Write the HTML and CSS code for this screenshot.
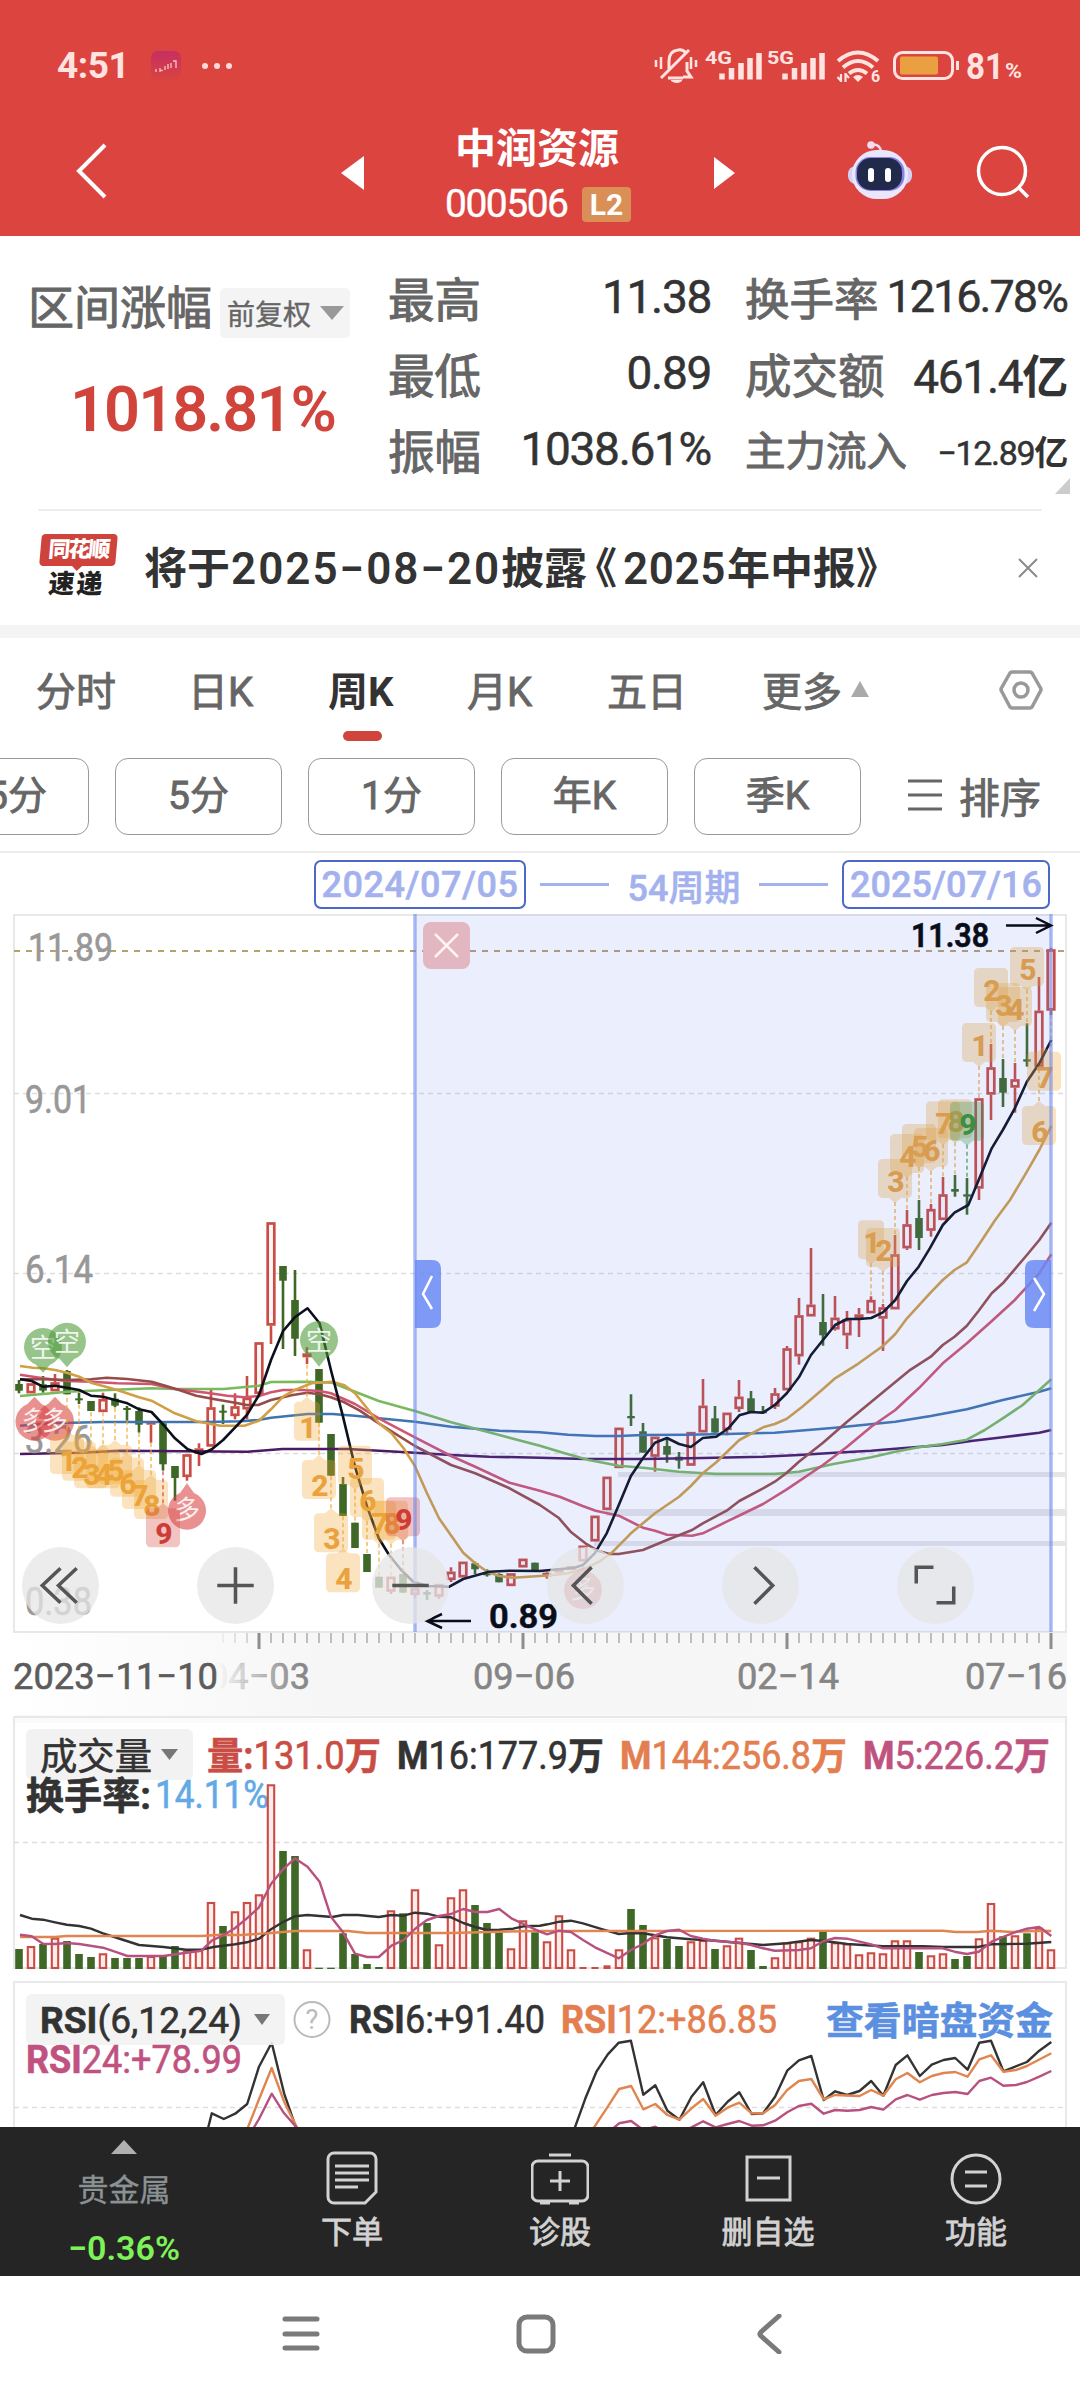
FILE: index.html
```html
<!DOCTYPE html>
<html lang="zh-CN">
<head>
<meta charset="utf-8">
<title>中润资源 000506</title>
<link rel="stylesheet" href="styles.css">
</head>
<body>
<header class="top">
  <div class="status">
    <span class="clock">4:51</span>
    <svg class="app" width="30" height="30" viewBox="0 0 30 30"><defs><linearGradient id="ag" x1="0" y1="0" x2="0" y2="1"><stop offset="0" stop-color="#c72e62"/><stop offset="1" stop-color="#d8453f"/></linearGradient></defs><rect width="30" height="30" rx="7" fill="url(#ag)"/><path d="M5 18v3M9 17v3l3-1M14 15v4M17 13v5M20 12v5M22 10h3v7" fill="none" stroke="#ffc4c4" stroke-width="1.3"/></svg>
    <svg class="dots" width="32" height="8" viewBox="0 0 32 8" fill="#ffdcd9"><circle cx="4" cy="4" r="3"/><circle cx="16" cy="4" r="3"/><circle cx="28" cy="4" r="3"/></svg>
    <svg class="signals" width="375" height="36" viewBox="653 48 375 36" fill="none" stroke="#ffe3e0" stroke-width="3">
      <path d="M669 69V61q0-10 9-11q5-1 8 3M683 77h8l-4-6v-9M668 78h15M689 50L661 78" /><path d="M656 60v7M661 57v12M696 60v7M691 57v12" stroke-width="2.500"/><path d="M671 80.500h11q-5 4-11 0z" fill="#ffe3e0" stroke-width="1"/>
      <g stroke-width="5.500"><path d="M722 79.500v-6M731.500 79.500V68M741 79.500V63M750 79.500V58M759 79.500V53"/><path d="M785 79.500v-6M794.500 79.500V68M804 79.500V63M813 79.500V58M822 79.500V53"/></g>
      <path d="M838 61q20-17 40 0M843 67.500q15-13 30 0M849 73.500q9-7 18 0" stroke-width="4"/><path d="M853 77q5-4 10 0l-5 5z" fill="#ffe3e0" stroke="none"/><path d="M841 82v-8M837.500 77l3.500 4M845.500 73v9M849 78l-3.500-4" stroke-width="2.200"/>
      <rect x="894.500" y="52.500" width="58" height="26" rx="8"/><rect x="900" y="56.500" width="38" height="18" rx="2" fill="#eaa040" stroke="none"/><path d="M957.500 61v9"/>
      <g class="sig-txt" fill="#ffe3e0" stroke="none"><text x="705" y="64" font-size="19" textLength="27" lengthAdjust="spacingAndGlyphs">4G</text><text x="767" y="64" font-size="19" textLength="27" lengthAdjust="spacingAndGlyphs">5G</text><text x="871" y="82" font-size="16">6</text><text x="966" y="79" font-size="37" textLength="38" lengthAdjust="spacingAndGlyphs">81</text><text x="1005" y="78" font-size="21" textLength="17" lengthAdjust="spacingAndGlyphs">%</text></g>
    </svg>
  </div>
  <div class="titlebar">
    <svg class="back" width="34" height="56" viewBox="0 0 34 56" fill="none" stroke="#fff" stroke-width="4"><path d="M31 2L5 28l26 26"/></svg>
    <svg class="prev" width="24" height="34" viewBox="0 0 24 34"><path d="M23 0v34L0 17z" fill="#fff"/></svg>
    <div class="title">
      <h1>中润资源</h1>
      <div class="code"><span>000506</span><b>L2</b></div>
    </div>
    <svg class="next" width="22" height="32" viewBox="0 0 22 32"><path d="M0 0v32l21-16z" fill="#fff"/></svg>
    <svg class="robot" width="64" height="60" viewBox="0 0 64 60"><circle cx="23" cy="5" r="3.800" fill="#f3dcf0"/><path d="M25 4.500q7 0 8 7" fill="none" stroke="#f3dcf0" stroke-width="2.500"/><rect x="0" y="26" width="64" height="18" rx="8" fill="#d3d1f4"/><rect x="4" y="10" width="56" height="49" rx="25" fill="#eae6fc"/><rect x="7.500" y="17" width="49" height="34" rx="15" fill="#8a80e6"/><rect x="9" y="18" width="45" height="32" rx="14" fill="#222a4c"/><rect x="20" y="28" width="6" height="14" rx="3" fill="#fff"/><rect x="37" y="28" width="6" height="14" rx="3" fill="#fff"/></svg>
    <svg class="search" width="54" height="54" viewBox="0 0 54 54" fill="none" stroke="#fff" stroke-width="3.500"><circle cx="26" cy="26" r="23.500"/><path d="M42 42l10 10"/></svg>
  </div>
</header>

<section class="stats">
  <div class="range">
    <div class="range-head"><span class="lbl">区间涨幅</span><span class="adjust">前复权<i class="tri-down"></i></span></div>
    <div class="gain">1018.81%</div>
  </div>
  <dl class="col mid">
    <div><dt>最高</dt><dd>11.38</dd></div>
    <div><dt>最低</dt><dd>0.89</dd></div>
    <div><dt>振幅</dt><dd>1038.61%</dd></div>
  </dl>
  <dl class="col end">
    <div><dt class="turn">换手率</dt><dd class="tight">1216.78%</dd></div>
    <div><dt>成交额</dt><dd>461.4<b>亿</b></dd></div>
    <div class="small"><dt>主力流入</dt><dd>−12.89<b>亿</b></dd></div>
  </dl>
  <i class="corner"></i>
</section>

<section class="news">
  <div class="logo"><span>同花顺</span><em>速递</em></div>
  <p>将于<u class="dt">2025−08−20</u>披露<u class="open">《</u><u class="yr">2025</u>年中报》</p>
  <svg width="20" height="20" viewBox="0 0 20 20" stroke="#8a8a8a" stroke-width="2"><path d="M1 1l18 18M19 1L1 19"/></svg>
</section>

<nav class="tabs">
  <span>分时</span><span>日K</span><span class="on">周K</span><span>月K</span><span>五日</span><span class="more">更多<i></i></span>
  <svg width="44" height="42" viewBox="0 0 44 42" fill="none" stroke="#999" stroke-width="3.500"><path d="M13 3h18a3 3 0 0 1 2 1l8 14a4 4 0 0 1 0 5l-8 15a3 3 0 0 1-2 1H13a3 3 0 0 1-2-1L3 23a4 4 0 0 1 0-5l8-14a3 3 0 0 1 2-1z"/><circle cx="22" cy="21" r="7"/></svg>
</nav>
<div class="chips">
  <span>15分</span><span>5分</span><span>1分</span><span>年K</span><span>季K</span>
  <div class="sort"><svg width="36" height="34" viewBox="0 0 36 34" stroke="#666" stroke-width="3"><path d="M1 3h34M1 17h34M1 31h34"/></svg>排序</div>
</div>
<div class="span-row">
  <span class="date">2024/07/05</span><i></i><span class="weeks">54周期</span><i></i><span class="date second">2025/07/16</span>
</div>

<section class="price">
  <svg id="price" width="1080" height="803" viewBox="0 912 1080 803"></svg>
  <div class="tools">
    <span><svg viewBox="-38 -38 76 76"><path d="M0-17L-18 0L0 17M16-17L-2 0L16 17"/></svg></span>
    <span><svg viewBox="-38 -38 76 76"><path d="M-18 0H18M0-18V18"/></svg></span>
    <span><svg viewBox="-38 -38 76 76"><path d="M-18 0H18"/></svg></span>
    <span><svg viewBox="-38 -38 76 76"><path d="M6-18L-12 0L6 18"/></svg></span>
    <span><svg viewBox="-38 -38 76 76"><path d="M-6-18L12 0L-6 18"/></svg></span>
    <span><svg viewBox="-38 -38 76 76"><path d="M-19-2V-18H-2M18 1V17H1"/></svg></span>
  </div>
</section>
<svg id="volume" class="panel" width="1080" height="266" viewBox="0 1715 1080 266"></svg>
<svg id="rsi" class="panel" width="1080" height="146" viewBox="0 1981 1080 146"></svg>

<footer class="bar">
  <div class="metal"><i></i><span>贵金属</span><b>−0.36%</b></div>
  <div><svg width="58" height="54" viewBox="0 0 58 54"><path d="M11 2h36a6 6 0 0 1 6 6v33L42 52H11a6 6 0 0 1-6-6V8a6 6 0 0 1 6-6zM12 15h34M12 22h34M12 29h34M12 36h23"/></svg><span>下单</span></div>
  <div><svg width="58" height="54" viewBox="0 0 58 54"><path d="M18 4h22M7 10h44a6 6 0 0 1 6 6v28a6 6 0 0 1-6 6H7a6 6 0 0 1-6-6V16a6 6 0 0 1 6-6zM29 20v20M19 30h20M9 52h10M38 52h10"/></svg><span>诊股</span></div>
  <div><svg width="58" height="54" viewBox="0 0 58 54"><path d="M8 6h43v43H8zM18 27h23"/></svg><span>删自选</span></div>
  <div><svg width="58" height="54" viewBox="0 0 58 54"><circle cx="29" cy="28" r="24"/><path d="M18 21h22M18 35h22"/></svg><span>功能</span></div>
</footer>
<div class="sysnav">
  <svg width="38" height="40" viewBox="0 0 38 40"><path d="M3 5h32M3 20h32M3 34h32"/></svg>
  <svg width="40" height="40" viewBox="0 0 40 40"><rect x="3" y="3" width="34" height="34" rx="8"/></svg>
  <svg width="26" height="40" viewBox="0 0 26 40"><path d="M23 2L5 18q-2 2 0 4L23 38"/></svg>
</div>
<script src="chart.js"></script>
</body>
</html>
```
FILE: styles.css
```css
* { box-sizing: border-box; }
body { margin: 0; width: 1080px; height: 2400px; overflow: hidden; background: #fff; color: #333; font-family: Roboto, "Noto Sans CJK SC", sans-serif; }
h1, p, dl, dd { margin: 0; }
svg { display: block; flex: none; }
i, em { font-style: normal; }

.top { height: 236px; background: #dc4440; color: #fff; padding-top: 48px; }
.status { height: 36px; display: flex; align-items: center; padding-left: 57px; color: #ffe3e0; }
.clock { width: 94px; font-size: 37px; font-weight: 700; line-height: 36px; letter-spacing: -.5px; }
.dots { margin-left: 20px; }
.signals { margin-left: 420px; }
.sig-txt { font-weight: 700; }
.titlebar { display: flex; height: 152px; align-items: center; padding-left: 74px; padding-top: 26px; }
.back { margin-top: -4px; }
.prev { margin-left: 233px; margin-top: -1px; }
.title { width: 206px; margin-left: 73px; margin-top: 4px; }
h1 { font-size: 41px; line-height: 52px; font-weight: 700; text-align: center; width: 198px; }
.code { display: flex; align-items: center; font-size: 39px; line-height: 46px; margin-top: 6px; padding-left: 7px; }
.code span { width: 126px; letter-spacing: -1.5px; -webkit-text-stroke: .4px; }
.code b { width: 49px; height: 35px; margin-left: 11px; border-radius: 4px; background: #d98f55; font-size: 30px; line-height: 36px; text-align: center; }
.next { margin-left: 70px; }
.robot { margin-left: 112px; margin-top: -6px; }
.search { margin-left: 64px; margin-top: -3px; }

.stats { height: 275px; position: relative; display: flex; padding: 22px 13px 0 28px; }
.stats::after { content: ""; position: absolute; left: 38px; right: 38px; bottom: 0; height: 2px; background: #ededed; }
.range { width: 360px; }
.range-head { display: flex; padding-top: 24px; align-items: center; height: 76px; }
.lbl { font-size: 46px; line-height: 50px; color: #666; width: 192px; white-space: nowrap; -webkit-text-stroke: 1px; }
.adjust { display: flex; align-items: center; width: 130px; height: 50px; margin-top: 10px; padding-left: 7px; background: #f4f4f4; border-radius: 5px; font-size: 28px; color: #666; -webkit-text-stroke: .4px; }
.tri-down { margin-left: 9px; border: 12px solid transparent; border-top: 14px solid #999; border-bottom: 0; }
.gain { margin: 41px 0 0 42px; font-size: 63px; line-height: 70px; font-weight: 600; color: #d1443b; letter-spacing: -1.9px; }
.col > div { height: 76px; display: flex; align-items: center; justify-content: space-between; white-space: nowrap; }
.mid { width: 323px; }
.end { width: 322px; margin-left: 34px; }
dt { font-size: 46.500px; color: #666; -webkit-text-stroke: 1px; }
dt.turn { font-size: 44.500px; }
dd { font-size: 46px; color: #333; letter-spacing: -1.3px; -webkit-text-stroke: .5px; padding-top: 1px; }
dd.tight { letter-spacing: -2px; font-size: 45px; }
dd b { font-weight: 700; -webkit-text-stroke: 0; }
.small dt { font-size: 40.500px; }
.small dd { font-size: 34px; letter-spacing: -1.300px; padding-top: 4px; }
.corner { position: absolute; right: 10px; bottom: 17px; border-left: 15px solid transparent; border-bottom: 16px solid #ccc; }

.news { height: 127px; display: flex; align-items: center; padding: 0 41px 0 39px; border-bottom: 13px solid #f4f4f4; position: relative; }
.logo { width: 78px; height: 66px; margin-top: -2px; transform: skewX(-5deg); }
.logo span { position: relative; display: block; width: 76px; height: 32px; border-radius: 4px; background: #cf433d; color: #fff; font-size: 22px; line-height: 31px; font-weight: 900; text-align: center; letter-spacing: -2px; }
.logo span::after { content: ""; position: absolute; left: 33px; top: 32px; border: 5px solid transparent; border-top-color: #cf433d; border-bottom: 0; }
.logo em { display: block; margin-top: 4px; font-size: 26px; line-height: 28px; font-weight: 900; text-align: center; color: #222; letter-spacing: 2px; }
.news p { margin: -6px 0 0 27px; width: 874px; font-size: 43px; font-weight: 700; white-space: nowrap; }
.news u { text-decoration: none; }
.dt { display: inline-block; width: 271px; font-size: 44px; letter-spacing: 2px; padding-left: 1px; font-weight: 600; }
.open { margin-left: -13px; }
.yr { display: inline-block; width: 110px; padding-left: 6px; font-size: 44px; letter-spacing: .6px; font-weight: 600; }

.tabs { position: relative; height: 108px; color: #666; font-size: 40px; display: flex; align-items: center; padding: 0 0 4px 36px; white-space: nowrap; -webkit-text-stroke: .9px; }
.tabs span { position: relative; width: 139px; top: -1px; }
.tabs span:nth-child(1) { width: 152px; }
.tabs span:nth-child(2) { width: 140px; }
.tabs span:nth-child(4) { width: 140px; }
.tabs span:nth-child(5) { width: 155px; }
.tabs .on { color: #333; font-weight: 700; -webkit-text-stroke: 0; }
.tabs .on::after { content: ""; position: absolute; left: 15px; bottom: -23px; width: 39px; height: 10px; border-radius: 5px; background: #d1443b; }
.tabs .more { width: 237px; display: flex; align-items: center; }
.more i { margin-left: 9px; border: 9px solid transparent; border-bottom: 16px solid #aaa; border-top: 0; }
.chips { height: 107px; display: flex; align-items: flex-start; padding-top: 12px; gap: 26px; margin-left: -78px; border-bottom: 2px solid #ececec; color: #666; font-size: 39px; -webkit-text-stroke: .9px; }
.chips > span { width: 167px; height: 77px; line-height: 74px; border: 1.500px solid #999; border-radius: 13px; text-align: center; white-space: nowrap; flex: none; }
.sort { display: flex; align-items: center; height: 74px; gap: 16px; font-size: 41px; margin-left: 20px; }
.span-row { display: flex; align-items: center; height: 59px; padding: 4px 0 0 314px; color: #a3b2ee; font-size: 36px; font-weight: 500; white-space: nowrap; -webkit-text-stroke: .5px; }
.date { width: 212px; height: 49px; line-height: 47px; border: 2px solid #4d68c4; border-radius: 7px; text-align: center; letter-spacing: .5px; }
.date.second { width: 208px; letter-spacing: 0; }
.span-row i { width: 69px; height: 3px; background: #a3b2ee; margin: 0 14px; }
.weeks { width: 122px; text-align: center; }

.price { position: relative; height: 803px; }
.tools { position: absolute; left: 22px; top: 635px; display: flex; gap: 98px; }
.tools span { width: 77px; height: 77px; border-radius: 50%; background: rgba(230, 230, 230, .76); }
.tools svg { width: 77px; height: 77px; fill: none; stroke: #555; stroke-width: 3.500; }

.bar { height: 149px; background: #252525; display: flex; color: #d2d2d2; }
.bar > div { width: 208px; display: flex; flex-direction: column; align-items: center; padding-top: 24px; }
.bar .metal { width: 248px; padding: 13px 0 0; }
.bar svg { fill: none; stroke: #d2d2d2; stroke-width: 3; }
.bar span { font-size: 31px; line-height: 46px; margin-top: 5px; -webkit-text-stroke: .8px; }
.metal i { border: 13px solid transparent; border-bottom: 14px solid #b0b0b0; border-top: 0; }
.bar .metal span { color: #8b9294; line-height: 40px; margin-top: 17px; -webkit-text-stroke: .3px; }
.metal b { font-size: 34px; line-height: 40px; color: #7ff25a; font-weight: 600; margin-top: 17px; }
.sysnav { height: 124px; display: flex; align-items: center; padding: 0 0 9px 282px; }
.sysnav svg { fill: none; stroke: #7a7a7a; stroke-width: 5; stroke-linecap: round; }
.sysnav svg + svg { margin-left: 196px; }
.sysnav svg:last-child { margin-left: 200px; }

#price text, .panel text { font-family: Roboto, "Noto Sans CJK SC", sans-serif; }
```
FILE: chart.js
```js
// Candles: [colour, high, top, bottom, low], in thirds of a pixel above/below the price origin.
const candles = `g540 552 572 580|r550 550 580 580|g528 553 572 578|r522 547 574 574|g510 513 583 583|g578 595 600 612|g603 603 633 633|r578 597 636 636|g580 596 617 622|g618 624 629 662|g622 633 674 698|r668 668 674 728|g670 670 793 812|g798 798 834 902|r763 763 831 842|r730 745 762 798|r570 622 740 740|g614 632 638 672|r580 619 648 658|r528 593 628 658|r427 427 582 592|r67 67 377 432|g198 198 242 447|g210 300 416 468|r442 460 472 492|g507 507 668 668|g702 702 827 827|g831 852 948 948|g968 968 1044 1044|g1062 1062 1116 1116|g1130 1130 1163 1163|r1130 1130 1175 1182|g1122 1122 1178 1178|r1165 1165 1185 1195|g1170 1176 1184 1200|r1152 1152 1190 1196|r1102 1115 1140 1146|r1085 1085 1132 1132|g1085 1090 1108 1122|g1108 1120 1126 1130|g1120 1122 1147 1147|r1120 1120 1158 1158|r1076 1076 1102 1102|g1088 1088 1114 1114|r1116 1118 1130 1136|r1104 1104 1118 1118|r1098 1098 1110 1110|r1037 1037 1084 1084|r947 947 1024 1024|r830 830 930 930|r683 683 804 804|g583 648 655 678|g669 694 758 758|r710 710 770 815|g714 738 764 788|g756 770 782 806|r696 696 797 797|r537 617 697 697|g618 655 698 698|r638 638 690 706|r540 590 627 636|g573 595 636 636|g618 634 639 639|r564 580 620 627|r438 445 571 571|r294 346 469 494|r144 314 349 349|g282 366 406 437|r288 353 388 392|r333 357 406 447|r324 343 360 411|r289 300 340 340|r312 322 356 453|r105 163 328 328|r30 73 145 150|g0 54 114 150|r12 27 92 110|r-69 -17 60 60|g-75 -33 -25 -10|g-66 -17 -10 44|r-305 -305 -34 0|r-468 -398 -316 -240|g-423 -366 -322 -279|r-411 -362 -337 -262|g-530 -422 -415 -400|r-669 -568 -400 -400|r-757 -752 -568 -555`.split('|').map(s => [s[0], ...s.slice(1).split(' ').map(Number)]);

const averages = [
  ['#4a1a62', '58,762 230,758 350,752 720,755 820,747 1010,747 1205,758 1310,765 1420,770 1568,773 1700,777 1867,777 2041,774 2216,770 2320,765 2425,758 2530,752 2600,746 2738,735 2820,723 2912,712 3018,698 3053,690'],
  ['#3f74ae', '58,677 150,670 300,666 600,666 700,664 750,660 787,653 893,642 965,642 1031,647 1100,655 1205,665 1310,680 1450,692 1568,697 1650,704 1730,708 1797,708 1867,705 1990,704 2110,702 2250,698 2320,692 2425,683 2600,665 2703,648 2808,628 2912,600 3018,575 3053,565'],
  ['#7bb95f', '58,588 150,580 194,575 264,572 440,565 508,567 650,567 752,557 787,546 893,545 965,548 1031,575 1100,603 1205,633 1310,667 1450,705 1568,737 1640,760 1710,780 1797,797 1867,803 1972,815 2080,822 2250,822 2320,815 2420,792 2530,772 2600,755 2668,742 2738,732 2808,719 2860,690 2912,655 2970,615 3053,538'],
  ['#cf5570', '58,524 125,535 194,543 264,545 340,550 440,552 508,567 600,578 660,587 710,592 752,588 787,577 822,570 880,570 928,573 961,580 1031,612 1100,655 1205,712 1310,768 1380,800 1480,848 1568,872 1625,890 1692,918 1730,932 1797,947 1867,983 1902,992 1937,1004 2010,1007 2041,1000 2110,965 2150,945 2216,912 2285,868 2390,795 2460,740 2530,680 2600,630 2668,565 2738,490 2808,430 2878,365 2947,300 3018,220 3053,163'],
  ['#964c48', '58,538 125,538 194,540 264,538 310,533 370,537 440,545 480,557 520,570 570,587 620,597 683,608 717,615 750,615 787,600 850,585 893,578 928,583 961,592 1000,607 1045,632 1100,670 1205,738 1310,795 1380,820 1480,865 1568,915 1622,953 1657,995 1700,1030 1735,1052 1770,1062 1797,1062 1867,1050 1937,1020 2010,990 2041,970 2110,932 2147,903 2216,865 2250,845 2285,818 2320,785 2390,728 2460,665 2564,577 2640,512 2703,470 2738,435 2772,410 2808,377 2842,332 2880,280 2912,250 2982,165 3018,120 3053,68'],
  ['#d19f45', '58,498 95,503 125,505 160,510 194,518 230,530 264,548 299,558 340,570 404,592 440,602 508,640 570,664 640,677 710,677 752,662 787,628 822,590 856,570 905,550 965,545 1000,556 1031,580 1066,625 1100,670 1137,700 1172,745 1205,798 1240,880 1275,955 1345,1058 1380,1090 1415,1115 1450,1128 1490,1133 1568,1128 1600,1126 1650,1120 1700,1105 1740,1085 1780,1055 1832,1000 1867,970 1902,940 1972,890 2006,858 2041,820 2080,787 2147,720 2216,682 2250,672 2285,656 2330,620 2390,567 2425,535 2494,490 2564,438 2600,402 2634,355 2703,277 2738,240 2772,210 2808,187 2842,135 2890,60 2933,0 2982,-85 3018,-150 3053,-222'],
  ['#0c0f1c', '58,538 92,543 125,560 160,557 194,563 230,570 264,587 299,590 334,600 370,610 404,628 440,636 475,675 508,715 545,748 585,762 615,748 648,720 683,682 717,645 752,585 787,480 822,393 856,352 893,325 928,370 961,510 996,650 1031,800 1066,920 1100,1015 1130,1065 1165,1110 1200,1145 1240,1158 1305,1160 1345,1137 1420,1115 1480,1112 1568,1113 1623,1108 1668,1103 1693,1095 1727,1060 1762,1000 1797,915 1832,828 1867,775 1902,728 1937,714 1972,732 2006,741 2041,714 2080,710 2115,685 2147,646 2181,636 2216,638 2250,615 2285,580 2320,532 2355,465 2390,420 2425,375 2460,357 2495,357 2530,354 2564,337 2600,300 2634,243 2668,200 2700,145 2738,75 2772,38 2812,15 2842,-60 2880,-155 2912,-210 2947,-275 2982,-355 3018,-410 3053,-480']
];

// Sequence tags: [candle, digit, digit centre, side]; side 1 hangs below the candle, -1 stands above it.
const tags = [[4,1,780,1],[5,2,800,1],[6,3,823,1],[7,4,823,1],[8,5,810,1],[9,6,848,1],[10,7,885,1],[11,8,915,1],[12,9,1000,1,'r'],
  [24,1,680,1],[25,2,855,1],[26,3,1015,1],[27,4,1135,1],[28,5,803,-1],[29,6,900,-1],[30,7,968,-1],[31,8,968,-1],[32,9,958,-1,'r'],
  [71,1,127,-1],[72,2,150,-1],[73,3,-57,-1],[74,4,-132,-1],[75,5,-162,-1],[76,6,-150,-1],[77,7,-230,-1],[78,8,-236,-1],[79,9,-229,-1,'g'],
  [80,1,-465,-1],[81,2,-630,-1],[82,3,-585,-1],[83,4,-573,-1],[84,5,-693,-1],[85,6,-207,1],[86,7,-370,1]];
const balloons = [[43,443,'空',518],[67,427,'空',502],[319,422,'空',500],[34.5,663,'多',590],[55,663,'多',590],[187,930,'多',850],[583,1168,'多',1100]];

const X = i => 19 + 12 * i;
const Y = v => 1200 + v / 3;
const f = n => n.toFixed(1);
const line = (color, pts, y0, w = 2.4) => `<polyline fill="none" stroke="${color}" stroke-width="${w}" stroke-linejoin="round" points="${pts.split(' ').map(p => { const [a, b] = p.split(','); return f(a / 2.904) + ',' + f(y0 + b / 3); }).join(' ')}"/>`;
const rect = (x, y, w, h, fill, extra = '') => `<rect x="${f(x)}" y="${f(y)}" width="${f(w)}" height="${f(h)}" fill="${fill}" ${extra}/>`;
const text = (x, y, len, size, fill, body, extra = '') => `<text x="${x}" y="${y}" textLength="${len}" lengthAdjust="spacingAndGlyphs" font-size="${size}" fill="${fill}" stroke="${fill}" stroke-width=".6" ${extra}>${body}</text>`;
const dash = (y, color, d, w = 1.3) => `<path d="M14 ${y}H1065" stroke="${color}" stroke-width="${w}" stroke-dasharray="${d}"/>`;
const RED = '#c94d45', GREEN = '#3f6826';

function drawPrice() {
  let s = '<defs><linearGradient id="ax" x1="0" x2="1" y1="0" y2="0"><stop offset="0" stop-color="#fff"/><stop offset=".3" stop-color="#f6f6f6"/><stop offset="1" stop-color="#f7f7f7"/></linearGradient><linearGradient id="fade" gradientUnits="userSpaceOnUse" x1="218" x2="300" y1="0" y2="0"><stop offset="0" stop-color="#888" stop-opacity="0"/><stop offset="1" stop-color="#888"/></linearGradient></defs>';
  s += rect(14, 1633, 1053, 82, 'url(#ax)');
  s += '<rect x="14" y="915" width="1052" height="717" fill="none" stroke="#e8e8e8" stroke-width="2"/>';
  s += dash(1093.5, '#ddd', '5 4') + dash(1273.5, '#ddd', '5 4') + dash(1453.5, '#ddd', '5 4') + dash(951, '#b89f70', '6 6', 2);
  s += rect(618, 1472, 449, 5, '#e6e6e8') + rect(606, 1509, 461, 7, '#e6e6e8') + rect(594, 1541, 473, 5, '#e6e6e8');
  candles.forEach(([c, hi, t, b, lo], i) => {
    const x = X(i), col = c === 'r' ? RED : GREEN;
    if (c === 'g') {
      s += rect(x - 1.3, Y(hi), 2.6, Y(lo) - Y(hi), col) + rect(x - 3.8, Y(t), 7.6, Math.max(2, Y(b) - Y(t)), col);
    } else {
      s += rect(x - 1.3, Y(hi), 2.6, Y(t) - Y(hi), col) + rect(x - 1.3, Y(b), 2.6, Y(lo) - Y(b), col);
      if (b - t < 20) s += rect(x - 4.6, Y(t), 9.2, Y(b) - Y(t), col);
      else s += rect(x - 3.3, Y(t) + 1.2, 6.6, Y(b) - Y(t) - 2.4, '#fff7f7', `stroke="${col}" stroke-width="2.7"`);
    }
  });
  averages.forEach(([c, p]) => { s += line(c, p, 1200, 2.6); });
  [[28, 961, 85, '11.89'], [25, 1112.5, 66, '9.01'], [25, 1282.5, 68, '6.14'], [25, 1452.5, 67, '3.26'], [25, 1614.5, 67, '0.38']].forEach(a => { s += text(a[0], a[1], a[2], 38, '#989898', a[3]); });
  balloons.forEach(([x, v, ch, tip]) => {
    const y = Y(v), d = tip > v ? 1 : -1, c = ch === '空' ? '#4b9a35' : '#d9403f';
    s += `<g opacity=".58"><path fill="${c}" d="M${x - 7} ${y + d * 17}L${x} ${Y(tip)}L${x + 7} ${y + d * 17}A19 19 0 1 ${d > 0 ? 0 : 1} ${x - 7} ${y + d * 17}z"/></g><text x="${x}" y="${y + 9}" font-size="26" fill="#fff" opacity=".85" text-anchor="middle">${ch}</text>`;
  });
  tags.forEach(([i, n, v, side, tone]) => {
    const x = X(i) - (i === 86 ? 7 : 0), y = Y(v);
    const bg = tone === 'r' ? '#d4453f' : tone === 'g' ? '#3f993a' : '#f0a834';
    const fg = tone === 'r' ? '#cd3d36' : tone === 'g' ? '#36932b' : '#eaa23c';
    const top = side > 0 ? y - 25 : y - 22, bot = top + 39, edge = side > 0 ? top : bot - 1, apex = side > 0 ? top - 5 : bot + 4;
    const w = n === 1 && i !== 80 && i !== 4 ? 13 : 17;
    s += `<path d="M${X(i)} ${apex}V${side > 0 ? Y(candles[i][4]) : Y(candles[i][1])}" stroke="${bg}" stroke-width="1.8" stroke-dasharray="4 3" opacity=".65"/>`;
    s += `<path fill="${bg}" opacity=".32" d="M${x - w + 5} ${top}${side > 0 ? `H${x - 6}L${x} ${apex}L${x + 6} ${top}` : ''}H${x + w - 5}q5 0 5 5V${bot - 5}q0 5-5 5${side < 0 ? `H${x + 6}L${x} ${apex + 1}L${x - 6} ${bot}` : ''}H${x - w + 5}q-5 0-5-5V${top + 5}q0-5 5-5z"/>`;
    s += `<text x="${x + 1}" y="${y + 11}" font-size="30" font-weight="800" fill="${fg}" text-anchor="middle">${n}</text>`;
  });
  s += rect(415, 914, 636, 718, '#5b76f0', 'opacity=".125"');
  s += '<path d="M415 914V1632M1051 914V1632" stroke="#6d88ea" stroke-opacity=".6" stroke-width="3.4"/>';
  s += '<path d="M415 1260h17q9 0 9 9v50q0 9-9 9h-17z" fill="#6c8af5" opacity=".85"/><path d="M1051 1260h-17q-9 0-9 9v50q0 9 9 9h17z" fill="#6c8af5" opacity=".85"/><path d="M432 1276l-9 18 9 15M1034 1278l10 16-10 17" fill="none" stroke="#fff" stroke-width="2.5"/>';
  s += rect(423, 922, 47, 47, '#e2b7c1', 'rx="8"') + '<path d="M435 934l23 23M458 934l-23 23" stroke="#fff3ee" stroke-width="2.5"/>';
  s += text(911, 947, 78, 33, '#090d18', '11.38', 'font-weight="600"') + '<path d="M1006 925.500H1050M1036 918l15 7.500-15 7.500" fill="none" stroke="#090d18" stroke-width="2.5"/>';
  s += text(489, 1628, 69, 33, '#090d18', '0.89', 'font-weight="600"') + '<path d="M471 1621H428M442 1614l-15 7 15 7" fill="none" stroke="#090d18" stroke-width="2.5"/>';
  for (let i = 17; i <= 86; i++) {
    const major = i % 22 === 20;
    s += rect(X(i) - (major ? 1.5 : .6), 1633, major ? 3 : 1.2, major ? 16 : 10, major ? '#8d8d8d' : '#999', i < 20 ? `opacity="${(i - 16) * .2}"` : '');
  }
  s += text(208, 1689, 102, 37, 'url(#fade)', '04−03') + text(13, 1689, 205, 37, '#5c5c5c', '2023−11−10');
  s += text(473, 1689, 102, 37, '#858585', '09−06') + text(737, 1689, 102, 37, '#858585', '02−14') + text(965, 1689, 102, 37, '#858585', '07−16');
  document.getElementById('price').innerHTML = s;
}

const volumes = 'g747 r738 g732 r713 g723 g762 g771 r760 g774 g774 g774 r768 g768 g738 r752 r748 r606 g678 r634 r606 r583 r253 g453 g468 r748 g803 g803 g700 g762 g792 g801 r631 g640 r568 g669 r733 r592 r568 g615 g669 g697 r745 r661 g697 r724 r646 r748 r801 r801 r796 r748 g627 g675 r712 g717 g738 r724 r720 g747 r736 r713 g750 g798 r772 r727 r724 r713 g696 r727 r730 r763 r757 r760 r721 r721 g756 r766 r760 g777 g768 r715 r609 g709 r706 g700 r683 r748'.split(' ');

function drawVolume() {
  let s = rect(14, 1715, 1053, 8, '#fafafa') + '<rect x="14" y="1717" width="1052" height="251" fill="none" stroke="#e8e8e8" stroke-width="2"/>' + dash(1842.5, '#ddd', '5 4');
  s += rect(26, 1729, 167, 51, '#f2f2f2', 'rx="6"');
  s += text(40, 1770, 112, 37, '#333', '成交量', 'stroke-width="1"') + '<path d="M161 1749h17l-8.500 11z" fill="#777"/>';
  s += text(207, 1769, 174, 38, RED, '<tspan font-weight="700">量:</tspan>131.0<tspan font-weight="700">万</tspan>');
  s += text(397, 1769, 207, 38, '#333', '<tspan font-weight="700">M</tspan>16:177.9<tspan font-weight="700">万</tspan>');
  s += text(620, 1769, 227, 38, '#e37e50', '<tspan font-weight="700">M</tspan>144:256.8<tspan font-weight="700">万</tspan>');
  s += text(863, 1769, 187, 38, '#c0527f', '<tspan font-weight="700">M</tspan>5:226.2<tspan font-weight="700">万</tspan>');
  s += text(26, 1809, 125, 38, '#333', '换手率:', 'font-weight="700"') + text(155, 1808, 114, 38, '#62a9e6', '14.11%');
  volumes.forEach((v, i) => {
    const x = X(i), y = 1700 + v.slice(1) / 3, h = 1969 - y;
    if (v[0] === 'g') s += rect(x - 3.8, y, 7.6, h, GREEN);
    else if (h < 5) s += rect(x - 3.5, y, 7, h, RED);
    else s += rect(x - 3.2, y + 1, 6.4, h - 2, '#fdeceb', `stroke="${RED}" stroke-width="2.1"`);
  });
  s += line('#333', '58,645 92,656 125,659 160,667 194,674 230,678 264,686 299,700 350,717 404,735 475,741 540,749 585,749 620,741 683,733 717,727 752,716 787,688 822,666 856,649 893,645 965,651 996,645 1040,645 1100,651 1137,645 1172,647 1205,638 1240,641 1275,650 1310,652 1345,669 1380,681 1415,690 1450,689 1490,686 1520,679 1568,677 1590,673 1625,665 1658,662 1693,670 1750,688 1797,702 1832,699 1867,700 1937,712 2006,718 2080,722 2147,729 2216,735 2285,730 2355,720 2400,724 2460,732 2564,739 2680,739 2738,741 2840,741 2878,733 2982,731 3053,726', 1700);
  s += line('#e08550', '58,711 160,711 194,708 585,708 640,704 700,705 787,699 856,693 1010,693 1066,699 1310,699 1450,695 1568,693 2738,692 2775,696 2840,696 2878,692 2940,696 3018,692 3053,693', 1700);
  s += line('#b8517f', '58,704 92,709 125,731 160,732 194,729 230,732 299,743 340,757 370,768 475,768 520,761 585,752 615,722 650,705 683,684 717,655 752,622 787,552 822,508 856,475 893,500 928,545 961,650 996,697 1031,761 1066,771 1100,771 1137,737 1172,720 1205,687 1240,660 1275,648 1310,642 1345,627 1380,636 1415,636 1450,627 1485,655 1520,672 1568,695 1589,703 1623,692 1658,696 1693,720 1728,742 1797,775 1832,750 1867,732 1902,706 1937,693 1972,689 2006,708 2041,716 2080,723 2147,728 2181,735 2216,745 2250,752 2320,750 2355,745 2390,724 2425,714 2460,716 2530,733 2564,745 2738,745 2772,755 2808,762 2842,755 2880,725 2912,711 2947,697 2982,686 3018,681 3053,708', 1700);
  document.getElementById('volume').innerHTML = s;
}

function drawRsi() {
  let s = '<rect x="14" y="1982" width="1052" height="200" fill="none" stroke="#e8e8e8" stroke-width="2"/>' + dash(2107.5, '#ddd', '5 4');
  s += line('#333', '603,1290 615,1240 650,1257 683,1241 718,1212 752,1100 789,1028 825,1180 862,1290', 1700);
  s += line('#333', '1667,1290 1700,1195 1732,1115 1765,1063 1797,1028 1832,1022 1868,1184 1903,1156 1938,1232 1973,1259 2008,1190 2042,1147 2078,1245 2113,1205 2147,1177 2183,1242 2216,1240 2251,1190 2286,1112 2320,1081 2356,1068 2392,1200 2425,1174 2460,1185 2496,1173 2530,1143 2565,1187 2601,1095 2635,1066 2671,1128 2706,1094 2740,1080 2774,1074 2810,1109 2844,1028 2878,1022 2914,1114 2982,1086 3018,1052 3053,1026', 1700);
  s += line('#e08550', '717,1290 752,1198 789,1104 825,1205 866,1290', 1700);
  s += line('#e08550', '1720,1290 1765,1220 1798,1167 1833,1158 1868,1228 1903,1212 1938,1245 1973,1259 2008,1225 2042,1197 2078,1247 2113,1223 2147,1208 2183,1240 2216,1240 2251,1215 2286,1170 2320,1143 2356,1137 2392,1198 2425,1185 2496,1188 2530,1170 2565,1187 2601,1138 2635,1119 2671,1147 2706,1128 2740,1119 2774,1116 2810,1130 2844,1078 2878,1066 2914,1115 2950,1110 2982,1098 3053,1060', 1700);
  s += line('#b8517f', '733,1290 752,1257 789,1181 825,1240 868,1290', 1700);
  s += line('#b8517f', '1775,1290 1798,1270 1833,1263 1868,1290 1903,1280 1938,1300 1973,1300 2008,1282 2042,1264 2078,1282 2113,1272 2147,1263 2183,1277 2216,1276 2251,1262 2286,1237 2320,1218 2356,1211 2392,1241 2425,1230 2460,1232 2496,1230 2530,1221 2565,1229 2601,1198 2635,1185 2671,1199 2706,1185 2740,1179 2774,1176 2810,1182 2844,1143 2878,1133 2914,1157 2950,1155 2982,1146 3018,1130 3053,1113', 1700);
  s += rect(26, 1994, 259, 51, '#f2f2f2', 'rx="6" fill-opacity=".9"');
  s += text(40, 2033, 202, 37, '#333', '<tspan font-weight="700">RSI</tspan>(6,12,24)') + '<path d="M254 2014h16l-8 11z" fill="#777"/>';
  s += '<circle cx="312" cy="2019.500" r="17.500" fill="#fff" stroke="#bbb" stroke-width="2"/><text x="312" y="2029" font-size="27" fill="#bbb" text-anchor="middle">?</text>';
  s += text(349, 2033, 196, 38, '#333', '<tspan font-weight="700">RSI</tspan>6:+91.40');
  s += text(561, 2033, 216, 38, '#e37e50', '<tspan font-weight="700">RSI</tspan>12:+86.85');
  s += text(26, 2073, 216, 38, '#c0527f', '<tspan font-weight="700">RSI</tspan>24:+78.99');
  s += text(826, 2034, 227, 38, '#5b8fe0', '查看暗盘资金', 'font-weight="700"');
  document.getElementById('rsi').innerHTML = s;
}

drawPrice();
drawVolume();
drawRsi();
```
